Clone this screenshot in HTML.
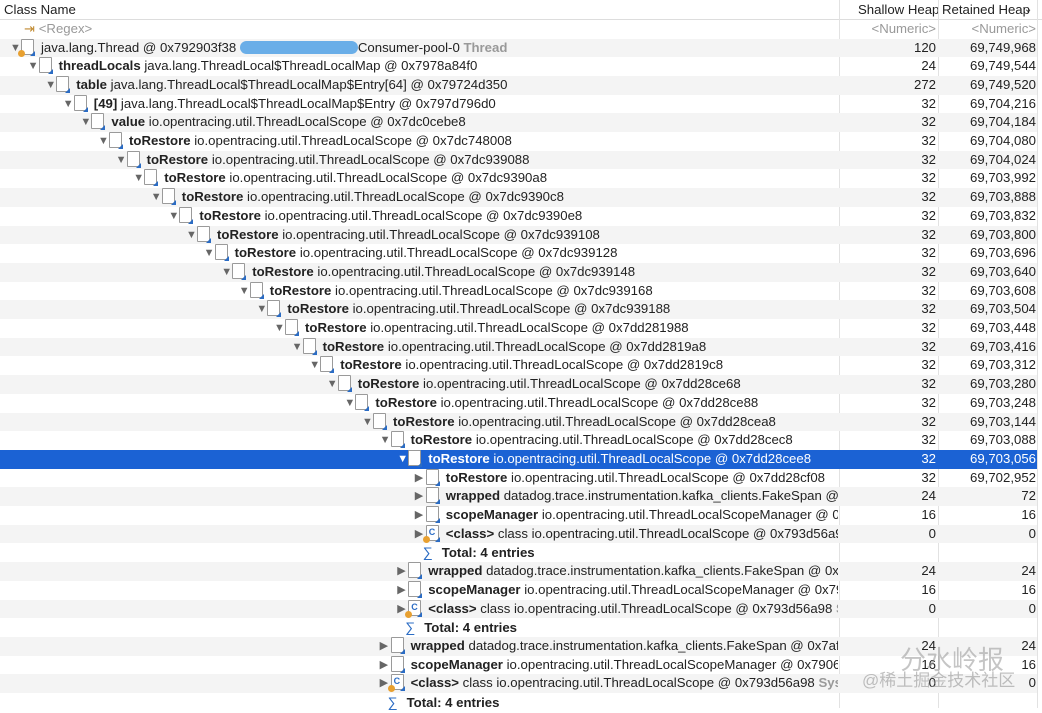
<!DOCTYPE html>
<html><head><meta charset="utf-8"><style>
body{margin:0;width:1042px;height:708px;overflow:hidden;background:#fff;font-family:"Liberation Sans",Arial,sans-serif;font-size:13.2px;color:#222;position:relative}
.hd{position:absolute;left:0;top:0;width:1042px;height:19px;border-bottom:1px solid #ddd;background:#fff}
.hd span{position:absolute;top:2px;white-space:nowrap;overflow:hidden}
.vl{position:absolute;top:0;width:1px;height:708px;background:#e2e2e2}
.r{position:absolute;left:0;width:1037px;height:18.7px;line-height:18.7px;top:calc(38.5px + var(--i)*18.7px)}
.g{background:#f4f4f4}
.sel{background:#1b62d4;color:#fff}
.n{position:absolute;left:0;top:0;width:838px;overflow:hidden;white-space:nowrap}
.in{display:inline-block;margin-left:calc(10px + var(--d)*17.6px)}
.a{display:inline-block;width:10px;font-size:11px;color:#666;vertical-align:top}
.sel .a{color:#fff}
.ic{display:inline-block;width:11px;height:14px;border:1px solid #9a9a9a;background:#fff;position:relative;vertical-align:-3px;margin:0 7px 0 1px;border-radius:1px}
.ic:after{content:"";position:absolute;right:-2px;bottom:-2px;width:0;height:0;border-left:5px solid transparent;border-bottom:5px solid #2b6cc4}
.ic.c:before{content:"C";position:absolute;left:2px;top:-3px;font-size:9px;color:#2b6cc4;font-weight:bold}
.dot{position:absolute;left:-4px;bottom:-3px;width:7px;height:7px;border-radius:50%;background:#e8a030}
.sg{display:inline-block;width:12px;color:#2b6cc4;margin:0 7px 0 -2px;font-size:14px}
.s{position:absolute;left:840px;width:96px;text-align:right;top:0}
.t{position:absolute;left:940px;width:96px;text-align:right;top:0}
.gr{color:#999}
</style></head><body>
<div class="hd"><span style="left:4px">Class Name</span><span style="left:858px">Shallow Heap</span><span style="left:942px;width:92px">Retained Heap</span><span style="left:1024px;font-size:10px;top:4px">⌄</span></div>
<div class="vl" style="left:839px"></div><div class="vl" style="left:938px"></div><div class="vl" style="left:1037px"></div>
<div class="r" style="top:19.8px;height:18.7px"><div class="n"><span style="margin-left:24px;color:#c08a30">⇥</span> <span class="gr">&lt;Regex&gt;</span></div><div class="s gr">&lt;Numeric&gt;</div><div class="t gr">&lt;Numeric&gt;</div></div>

<div class="r g" style="--i:0"><div class="n"><span class="in" style="--d:0"><span class="a">▼</span><span class="ic"><span class="dot"></span></span>java.lang.Thread @ 0x792903f38 <span style="display:inline-block;width:118px;height:13px;background:#6aaee8;border-radius:7px;vertical-align:-2px"></span>Consumer-pool-0 <b class="gr">Thread</b></span></div><div class="s">120</div><div class="t">69,749,968</div></div>
<div class="r" style="--i:1"><div class="n"><span class="in" style="--d:1"><span class="a">▼</span><span class="ic"></span><b>threadLocals</b> java.lang.ThreadLocal$ThreadLocalMap @ 0x7978a84f0</span></div><div class="s">24</div><div class="t">69,749,544</div></div>
<div class="r g" style="--i:2"><div class="n"><span class="in" style="--d:2"><span class="a">▼</span><span class="ic"></span><b>table</b> java.lang.ThreadLocal$ThreadLocalMap$Entry[64] @ 0x79724d350</span></div><div class="s">272</div><div class="t">69,749,520</div></div>
<div class="r" style="--i:3"><div class="n"><span class="in" style="--d:3"><span class="a">▼</span><span class="ic"></span><b>[49]</b> java.lang.ThreadLocal$ThreadLocalMap$Entry @ 0x797d796d0</span></div><div class="s">32</div><div class="t">69,704,216</div></div>
<div class="r g" style="--i:4"><div class="n"><span class="in" style="--d:4"><span class="a">▼</span><span class="ic"></span><b>value</b> io.opentracing.util.ThreadLocalScope @ 0x7dc0cebe8</span></div><div class="s">32</div><div class="t">69,704,184</div></div>
<div class="r" style="--i:5"><div class="n"><span class="in" style="--d:5"><span class="a">▼</span><span class="ic"></span><b>toRestore</b> io.opentracing.util.ThreadLocalScope @ 0x7dc748008</span></div><div class="s">32</div><div class="t">69,704,080</div></div>
<div class="r g" style="--i:6"><div class="n"><span class="in" style="--d:6"><span class="a">▼</span><span class="ic"></span><b>toRestore</b> io.opentracing.util.ThreadLocalScope @ 0x7dc939088</span></div><div class="s">32</div><div class="t">69,704,024</div></div>
<div class="r" style="--i:7"><div class="n"><span class="in" style="--d:7"><span class="a">▼</span><span class="ic"></span><b>toRestore</b> io.opentracing.util.ThreadLocalScope @ 0x7dc9390a8</span></div><div class="s">32</div><div class="t">69,703,992</div></div>
<div class="r g" style="--i:8"><div class="n"><span class="in" style="--d:8"><span class="a">▼</span><span class="ic"></span><b>toRestore</b> io.opentracing.util.ThreadLocalScope @ 0x7dc9390c8</span></div><div class="s">32</div><div class="t">69,703,888</div></div>
<div class="r" style="--i:9"><div class="n"><span class="in" style="--d:9"><span class="a">▼</span><span class="ic"></span><b>toRestore</b> io.opentracing.util.ThreadLocalScope @ 0x7dc9390e8</span></div><div class="s">32</div><div class="t">69,703,832</div></div>
<div class="r g" style="--i:10"><div class="n"><span class="in" style="--d:10"><span class="a">▼</span><span class="ic"></span><b>toRestore</b> io.opentracing.util.ThreadLocalScope @ 0x7dc939108</span></div><div class="s">32</div><div class="t">69,703,800</div></div>
<div class="r" style="--i:11"><div class="n"><span class="in" style="--d:11"><span class="a">▼</span><span class="ic"></span><b>toRestore</b> io.opentracing.util.ThreadLocalScope @ 0x7dc939128</span></div><div class="s">32</div><div class="t">69,703,696</div></div>
<div class="r g" style="--i:12"><div class="n"><span class="in" style="--d:12"><span class="a">▼</span><span class="ic"></span><b>toRestore</b> io.opentracing.util.ThreadLocalScope @ 0x7dc939148</span></div><div class="s">32</div><div class="t">69,703,640</div></div>
<div class="r" style="--i:13"><div class="n"><span class="in" style="--d:13"><span class="a">▼</span><span class="ic"></span><b>toRestore</b> io.opentracing.util.ThreadLocalScope @ 0x7dc939168</span></div><div class="s">32</div><div class="t">69,703,608</div></div>
<div class="r g" style="--i:14"><div class="n"><span class="in" style="--d:14"><span class="a">▼</span><span class="ic"></span><b>toRestore</b> io.opentracing.util.ThreadLocalScope @ 0x7dc939188</span></div><div class="s">32</div><div class="t">69,703,504</div></div>
<div class="r" style="--i:15"><div class="n"><span class="in" style="--d:15"><span class="a">▼</span><span class="ic"></span><b>toRestore</b> io.opentracing.util.ThreadLocalScope @ 0x7dd281988</span></div><div class="s">32</div><div class="t">69,703,448</div></div>
<div class="r g" style="--i:16"><div class="n"><span class="in" style="--d:16"><span class="a">▼</span><span class="ic"></span><b>toRestore</b> io.opentracing.util.ThreadLocalScope @ 0x7dd2819a8</span></div><div class="s">32</div><div class="t">69,703,416</div></div>
<div class="r" style="--i:17"><div class="n"><span class="in" style="--d:17"><span class="a">▼</span><span class="ic"></span><b>toRestore</b> io.opentracing.util.ThreadLocalScope @ 0x7dd2819c8</span></div><div class="s">32</div><div class="t">69,703,312</div></div>
<div class="r g" style="--i:18"><div class="n"><span class="in" style="--d:18"><span class="a">▼</span><span class="ic"></span><b>toRestore</b> io.opentracing.util.ThreadLocalScope @ 0x7dd28ce68</span></div><div class="s">32</div><div class="t">69,703,280</div></div>
<div class="r" style="--i:19"><div class="n"><span class="in" style="--d:19"><span class="a">▼</span><span class="ic"></span><b>toRestore</b> io.opentracing.util.ThreadLocalScope @ 0x7dd28ce88</span></div><div class="s">32</div><div class="t">69,703,248</div></div>
<div class="r g" style="--i:20"><div class="n"><span class="in" style="--d:20"><span class="a">▼</span><span class="ic"></span><b>toRestore</b> io.opentracing.util.ThreadLocalScope @ 0x7dd28cea8</span></div><div class="s">32</div><div class="t">69,703,144</div></div>
<div class="r" style="--i:21"><div class="n"><span class="in" style="--d:21"><span class="a">▼</span><span class="ic"></span><b>toRestore</b> io.opentracing.util.ThreadLocalScope @ 0x7dd28cec8</span></div><div class="s">32</div><div class="t">69,703,088</div></div>
<div class="r sel" style="--i:22"><div class="n"><span class="in" style="--d:22"><span class="a">▼</span><span class="ic"></span><b>toRestore</b> io.opentracing.util.ThreadLocalScope @ 0x7dd28cee8</span></div><div class="s">32</div><div class="t">69,703,056</div></div>
<div class="r" style="--i:23"><div class="n"><span class="in" style="--d:23"><span class="a">▶</span><span class="ic"></span><b>toRestore</b> io.opentracing.util.ThreadLocalScope @ 0x7dd28cf08</span></div><div class="s">32</div><div class="t">69,702,952</div></div>
<div class="r g" style="--i:24"><div class="n"><span class="in" style="--d:23"><span class="a">▶</span><span class="ic"></span><b>wrapped</b> datadog.trace.instrumentation.kafka_clients.FakeSpan @ 0x7af2</span></div><div class="s">24</div><div class="t">72</div></div>
<div class="r" style="--i:25"><div class="n"><span class="in" style="--d:23"><span class="a">▶</span><span class="ic"></span><b>scopeManager</b> io.opentracing.util.ThreadLocalScopeManager @ 0x7906c</span></div><div class="s">16</div><div class="t">16</div></div>
<div class="r g" style="--i:26"><div class="n"><span class="in" style="--d:23"><span class="a">▶</span><span class="ic c"><span class="dot"></span></span><b>&lt;class&gt;</b> class io.opentracing.util.ThreadLocalScope @ 0x793d56a98</span></div><div class="s">0</div><div class="t">0</div></div>
<div class="r" style="--i:27"><div class="n"><span class="in" style="--d:23"><span class="a"></span><span class="sg">∑</span><b>Total: 4 entries</b></span></div></div>
<div class="r g" style="--i:28"><div class="n"><span class="in" style="--d:22"><span class="a">▶</span><span class="ic"></span><b>wrapped</b> datadog.trace.instrumentation.kafka_clients.FakeSpan @ 0x7af2</span></div><div class="s">24</div><div class="t">24</div></div>
<div class="r" style="--i:29"><div class="n"><span class="in" style="--d:22"><span class="a">▶</span><span class="ic"></span><b>scopeManager</b> io.opentracing.util.ThreadLocalScopeManager @ 0x7906c</span></div><div class="s">16</div><div class="t">16</div></div>
<div class="r g" style="--i:30"><div class="n"><span class="in" style="--d:22"><span class="a">▶</span><span class="ic c"><span class="dot"></span></span><b>&lt;class&gt;</b> class io.opentracing.util.ThreadLocalScope @ 0x793d56a98 <b class="gr">System</b></span></div><div class="s">0</div><div class="t">0</div></div>
<div class="r" style="--i:31"><div class="n"><span class="in" style="--d:22"><span class="a"></span><span class="sg">∑</span><b>Total: 4 entries</b></span></div></div>
<div class="r g" style="--i:32"><div class="n"><span class="in" style="--d:21"><span class="a">▶</span><span class="ic"></span><b>wrapped</b> datadog.trace.instrumentation.kafka_clients.FakeSpan @ 0x7af2</span></div><div class="s">24</div><div class="t">24</div></div>
<div class="r" style="--i:33"><div class="n"><span class="in" style="--d:21"><span class="a">▶</span><span class="ic"></span><b>scopeManager</b> io.opentracing.util.ThreadLocalScopeManager @ 0x7906c</span></div><div class="s">16</div><div class="t">16</div></div>
<div class="r g" style="--i:34"><div class="n"><span class="in" style="--d:21"><span class="a">▶</span><span class="ic c"><span class="dot"></span></span><b>&lt;class&gt;</b> class io.opentracing.util.ThreadLocalScope @ 0x793d56a98 <b class="gr">System</b></span></div><div class="s">0</div><div class="t">0</div></div>
<div class="r" style="--i:35"><div class="n"><span class="in" style="--d:21"><span class="a"></span><span class="sg">∑</span><b>Total: 4 entries</b></span></div></div>

<div style="position:absolute;left:900px;top:640px;font-size:26px;color:rgba(150,150,150,.55);font-family:'Noto Sans CJK SC',sans-serif">分水岭报</div>
<div style="position:absolute;left:862px;top:666px;font-size:17px;color:rgba(150,150,150,.6);font-family:'Liberation Sans','Noto Sans CJK SC',sans-serif">@稀土掘金技术社区</div>
</body></html>
